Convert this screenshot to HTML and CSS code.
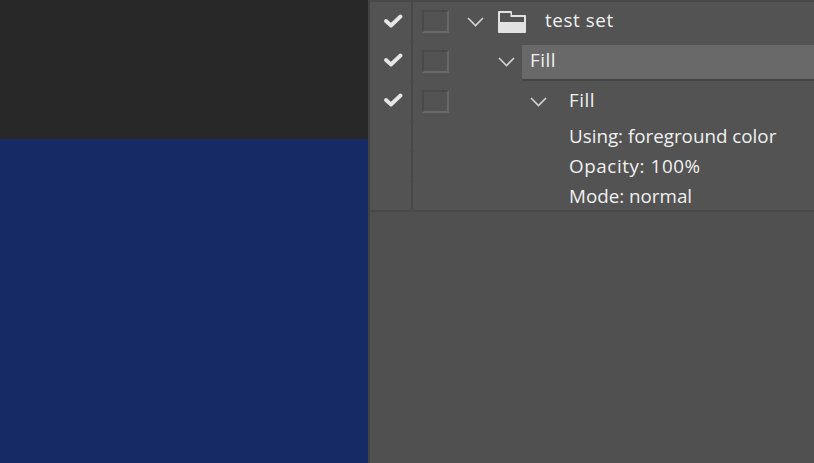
FILE: index.html
```html
<!DOCTYPE html>
<html lang="en">
<head>
  <meta charset="UTF-8">
  <title>Actions</title>
  <link rel="stylesheet" href="styles.css">
</head>
<body>
  <div class="canvas">
    <div class="canvas-top"></div>
    <div class="canvas-doc"></div>
  </div>
  <div class="panel">
    <div class="actions">
      <div class="row">
        <div class="cell-check"><svg class="check" viewBox="0 0 20 16"><path d="M3 8 L8 12.500 L17.500 3.500"/></svg></div>
        <div class="cell-box"><span class="box"></span></div>
        <div class="row-body indent-set">
          <svg class="chevron" viewBox="0 0 17 10"><path d="M1 1 L8.500 8.500 L16 1"/></svg>
          <svg class="folder" viewBox="0 0 28 22"><path d="M1 0 H13 a1 1 0 0 1 1 1 V4 H27 a1 1 0 0 1 1 1 V21 a1 1 0 0 1 -1 1 H1 a1 1 0 0 1 -1 -1 V1 a1 1 0 0 1 1 -1 Z M2 2 V11 H26 V6 H12.500 V2 Z" fill-rule="evenodd"/></svg>
          <span class="label label-set">test set</span>
        </div>
      </div>
      <div class="row">
        <div class="cell-check"><svg class="check" viewBox="0 0 20 16"><path d="M3 8 L8 12.500 L17.500 3.500"/></svg></div>
        <div class="cell-box"><span class="box"></span></div>
        <div class="row-body indent-action">
          <svg class="chevron" viewBox="0 0 17 10"><path d="M1 1 L8.500 8.500 L16 1"/></svg>
          <div class="selected"><span class="label">Fill</span></div>
        </div>
      </div>
      <div class="row">
        <div class="cell-check"><svg class="check" viewBox="0 0 20 16"><path d="M3 8 L8 12.500 L17.500 3.500"/></svg></div>
        <div class="cell-box"><span class="box"></span></div>
        <div class="row-body indent-step">
          <svg class="chevron" viewBox="0 0 17 10"><path d="M1 1 L8.500 8.500 L16 1"/></svg>
          <span class="label">Fill</span>
        </div>
      </div>
      <div class="detail">
        <div class="cell-check"></div>
        <div class="detail-text">Using: foreground color</div>
      </div>
      <div class="detail">
        <div class="cell-check"></div>
        <div class="detail-text detail-opacity">Opacity: 100%</div>
      </div>
      <div class="detail detail-last">
        <div class="cell-check"></div>
        <div class="detail-text">Mode: normal</div>
      </div>
    </div>
  </div>
</body>
</html>
```

FILE: styles.css
```css
html, body {
  margin: 0;
  padding: 0;
  height: 100%;
  overflow: hidden;
}
body {
  display: flex;
  background: #505050;
  color: #f0f0f0;
  font-family: "Open Sans", Arial, sans-serif;
  font-size: 18.8px;
}
.canvas {
  width: 368px;
  display: flex;
  flex-direction: column;
}
.canvas-top {
  height: 139px;
  background: #282828;
}
.canvas-doc {
  flex: 1;
  background: #162b66;
}
.panel {
  flex: 1;
  border-left: 2px solid #434343;
  background: #505050;
}
.actions {
  border-top: 2px solid #484848;
  border-bottom: 2px solid #484848;
  background: #535353;
}
.row {
  display: flex;
  height: 40px;
}
.row:first-child {
  height: 39px;
}
.cell-check {
  position: relative;
  width: 41px;
  flex: none;
  display: flex;
  align-items: center;
  justify-content: center;
  border-right: 2px solid #484848;
}
/* small tick where the column line meets the next row */
.cell-check::after {
  content: "";
  position: absolute;
  right: -3px;
  bottom: -1px;
  width: 4px;
  height: 2px;
  background: #4c4c4c;
}
.check {
  width: 20px;
  height: 16px;
  margin: 0 0 2px 5px;
}
.check path {
  fill: none;
  stroke: #e6e6e6;
  stroke-width: 3.8;
  stroke-linecap: round;
  stroke-linejoin: round;
}
.cell-box {
  width: 37px;
  flex: none;
  display: flex;
  align-items: flex-start;
  justify-content: flex-end;
}
.box {
  box-sizing: border-box;
  width: 27px;
  height: 23px;
  margin: 9px 1px 0 0;
  border: 2px solid #4a4a4a;
  border-right-color: #696969;
  border-bottom-color: #696969;
}
.row:first-child .box {
  margin-top: 8px;
}
.row-body {
  flex: 1;
  display: flex;
  align-items: center;
}
.row-body .label {
  margin-bottom: 3px;
  letter-spacing: 0.5px;
}
.row-body .label-set {
  letter-spacing: 0.6px;
}
.indent-set {
  padding-left: 17px;
}
.indent-action {
  padding-left: 48px;
}
.indent-step {
  padding-left: 80px;
}
.chevron {
  width: 17px;
  height: 10px;
  flex: none;
  margin-top: 1px;
}
.chevron path {
  fill: none;
  stroke: #d4d4d4;
  stroke-width: 1.6;
}
.folder {
  width: 28px;
  height: 22px;
  margin-left: 14px;
  fill: #e2e2e2;
}
.indent-set .label {
  margin-left: 19px;
}
.indent-step .label {
  margin-left: 22px;
}
.selected {
  box-sizing: border-box;
  flex: 1;
  align-self: flex-end;
  height: 36px;
  margin-left: 7px;
  padding-left: 8px;
  display: flex;
  align-items: center;
  background: #696969;
  border-bottom: 2px solid #444;
}
.selected .label {
  margin-bottom: 5px;
}
.detail {
  display: flex;
  height: 30px;
}
.detail-last {
  height: 29px;
}
.detail-text {
  padding-left: 156px;
  line-height: 30px;
}
.detail-opacity {
  letter-spacing: 0.6px;
}
```
